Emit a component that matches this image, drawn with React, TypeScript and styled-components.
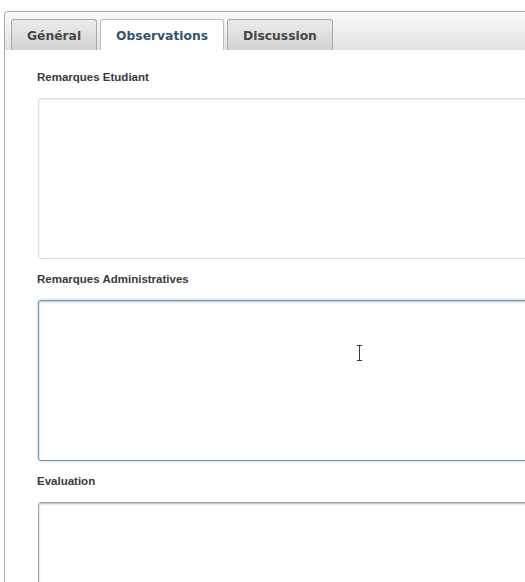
import React from "react";
import styled, { createGlobalStyle, css } from "styled-components";

const Global = createGlobalStyle`
  html, body {
    margin: 0;
    padding: 0;
    background: #ffffff;
    overflow: hidden;
  }
  body {
    width: 525px;
    height: 582px;
    position: relative;
  }
`;

const Panel = styled.div`
  margin: 11px 0 0 4px;
  width: 521px;
  height: 571px;
  box-sizing: border-box;
  border: 1px solid #a9a9a9;
  border-right: none;
  border-bottom: none;
  border-radius: 4px 0 0 0;
  background: #ffffff;
  overflow: hidden;
`;

const TabBar = styled.div`
  height: 38px;
  box-sizing: border-box;
  padding: 7px 0 0 6px;
  display: flex;
  align-items: flex-end;
  gap: 3px;
  background: linear-gradient(to bottom, #fafafa 0%, #e2e2e2 100%);
  border-radius: 3px 0 0 0;
`;

const Tab = styled.div<{ $active?: boolean }>`
  height: 31px;
  box-sizing: border-box;
  padding: 2px 15px 0;
  display: flex;
  align-items: center;
  border: 1px solid #a8a8a8;
  border-bottom: none;
  border-radius: 3px 3px 0 0;
  font-family: "DejaVu Sans", Verdana, sans-serif;
  font-weight: bold;
  font-size: 12.3px;
  color: #474747;
  background: linear-gradient(to bottom, #ececec 0%, #d2d2d2 100%);
  ${(p) =>
    p.$active &&
    css`
      background: #ffffff;
      color: #2f5674;
      border-color: #bdbdbd;
    `}
`;

const Content = styled.div`
  padding: 20px 0 0 32px;
  display: flex;
  flex-direction: column;
`;

const Field = styled.div`
  display: flex;
  flex-direction: column;
  margin-bottom: 13px;
`;

const Label = styled.label`
  font-family: "Liberation Sans", Arial, sans-serif;
  font-weight: bold;
  font-size: 11.5px;
  line-height: 14px;
  color: #3a3a3a;
  margin: 0 0 14px 0;
`;

type Variant = "normal" | "focus" | "hover";

const Area = styled.textarea<{ $variant: Variant }>`
  display: block;
  width: 540px;
  height: 161px;
  flex-shrink: 0;
  box-sizing: border-box;
  margin: 0 0 0 1px;
  padding: 4px;
  resize: none;
  outline: none;
  border-radius: 3px;
  background: #ffffff;
  font-family: "Liberation Sans", Arial, sans-serif;
  font-size: 12px;
  ${(p) =>
    p.$variant === "normal" &&
    css`
      border: 1px solid #dadada;
      box-shadow: inset 0 1px 2px rgba(0, 0, 0, 0.07);
    `}
  ${(p) =>
    p.$variant === "focus" &&
    css`
      border: 1px solid #6d9ab6;
      box-shadow: 0 0 3px rgba(109, 154, 182, 0.55),
        inset 0 1px 2px rgba(0, 0, 0, 0.25);
    `}
  ${(p) =>
    p.$variant === "hover" &&
    css`
      border: 1px solid #a4a4a4;
      box-shadow: inset 0 1px 2px rgba(0, 0, 0, 0.3);
    `}
`;

const Cursor = styled.svg`
  position: absolute;
  left: 355px;
  top: 343px;
  width: 9px;
  height: 21px;
  pointer-events: none;
`;

const fields: { label: string; variant: Variant }[] = [
  { label: "Remarques Etudiant", variant: "normal" },
  { label: "Remarques Administratives", variant: "focus" },
  { label: "Evaluation", variant: "hover" },
];

export default function App() {
  return (
    <>
      <Global />
      <Panel>
        <TabBar>
          <Tab>Général</Tab>
          <Tab $active>Observations</Tab>
          <Tab>Discussion</Tab>
        </TabBar>
        <Content>
          {fields.map((f) => (
            <Field key={f.label}>
              <Label>{f.label}</Label>
              <Area $variant={f.variant} defaultValue="" />
            </Field>
          ))}
        </Content>
      </Panel>
      <Cursor viewBox="0 0 9 21">
        <path
          d="M2 2.5h5M4.5 2.5v15M2 17.5h5"
          stroke="#ffffff"
          strokeWidth="2.6"
          fill="none"
          opacity="0.8"
        />
        <path
          d="M2 2.5h5M4.5 2.5v15M2 17.5h5"
          stroke="#3a3a3a"
          strokeWidth="1"
          fill="none"
        />
      </Cursor>
    </>
  );
}
